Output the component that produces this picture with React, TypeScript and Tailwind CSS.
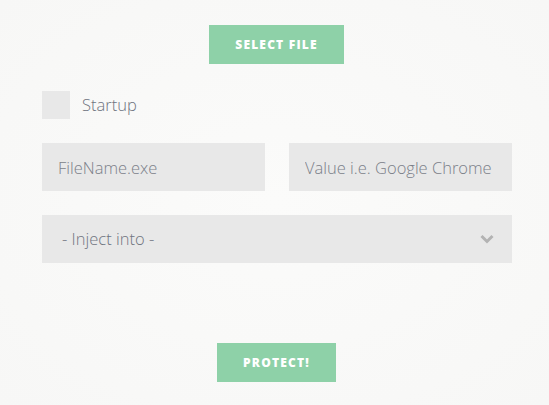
import React, { useState } from 'react'

export default function App() {
  const [startup, setStartup] = useState(false)
  const [fileName, setFileName] = useState('')
  const [value, setValue] = useState('')
  const [target, setTarget] = useState('')

  return (
    <div
      className="min-h-[405px] w-full bg-[radial-gradient(ellipse_at_center,#fbfbfa_0%,#f7f7f6_100%)] pt-[25px]"
      style={{ fontFamily: '"Open Sans", Lato, sans-serif' }}
    >
      <div className="ml-[42px] w-[470px]">
        <div className="flex justify-center">
          <button className="-ml-px h-[39px] w-[135px] bg-[#8ed1a8] text-[12px] font-extrabold tracking-[1.2px] text-white uppercase">
            Select File
          </button>
        </div>

        <label className="mt-[27px] flex items-center gap-3 cursor-pointer">
          <span
            onClick={() => setStartup(!startup)}
            className="h-[28px] w-[28px] bg-[#e8e8e8] flex items-center justify-center"
          >
            {startup && <span className="h-3 w-3 bg-[#8ed1a8]" />}
          </span>
          <span className="text-[16.5px] font-light text-[#6f7480]">Startup</span>
        </label>

        <div className="mt-[24px] flex gap-[24px]">
          <input
            type="text"
            value={fileName}
            onChange={(e) => setFileName(e.target.value)}
            placeholder="FileName.exe"
            className="h-[48px] w-[223px] bg-[#e8e8e8] px-4 text-[16.5px] font-light text-[#6f737d] placeholder:text-[#7b7f88] outline-none"
          />
          <input
            type="text"
            value={value}
            onChange={(e) => setValue(e.target.value)}
            placeholder="Value i.e. Google Chrome"
            className="h-[48px] w-[223px] bg-[#e8e8e8] px-4 text-[16.5px] font-light text-[#6f737d] placeholder:text-[#7b7f88] outline-none"
          />
        </div>

        <div className="relative mt-[24px]">
          <select
            value={target}
            onChange={(e) => setTarget(e.target.value)}
            className="h-[48px] w-full appearance-none bg-[#e8e8e8] pl-5 text-[16.5px] font-light text-[#6f7480] outline-none"
          >
            <option value="">- Inject into -</option>
            <option value="explorer">explorer.exe</option>
            <option value="svchost">svchost.exe</option>
          </select>
          <svg
            className="pointer-events-none absolute right-[18px] top-[19px]"
            width="14"
            height="10"
            viewBox="0 0 14 10"
          >
            <path d="M1.5 2 L7 7.5 L12.5 2" fill="none" stroke="#b3b3b3" strokeWidth="3" />
          </svg>
        </div>

        <div className="mt-[80px] flex justify-center">
          <button className="-ml-px h-[39px] w-[119px] bg-[#8ed1a8] text-[12px] font-extrabold tracking-[1.2px] text-white uppercase">
            Protect!
          </button>
        </div>
      </div>
    </div>
  )
}
